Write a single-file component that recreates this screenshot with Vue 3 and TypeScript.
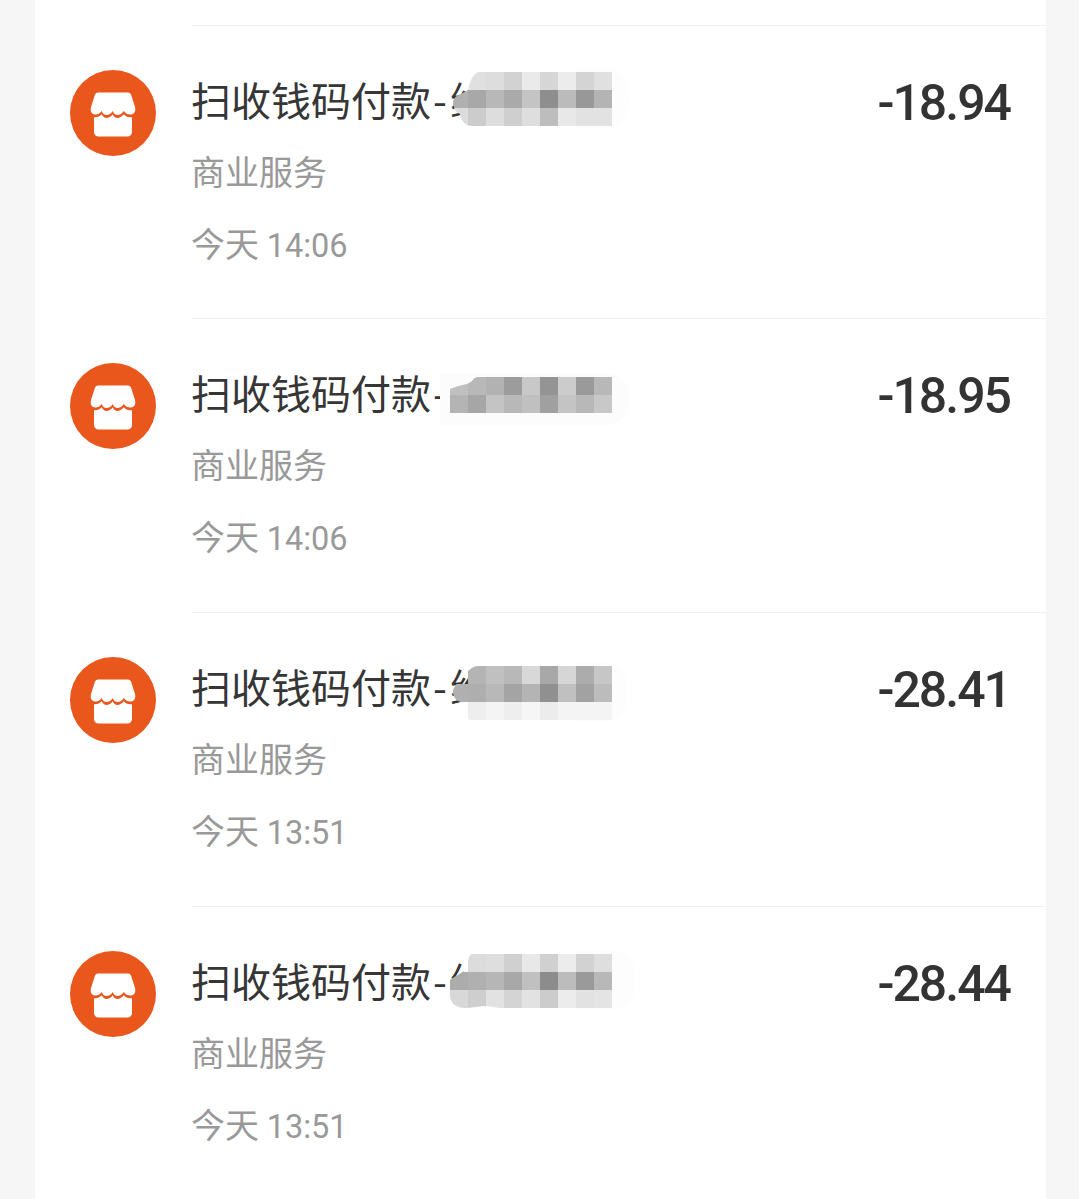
<script setup lang="ts">
interface Tx {
  amount: string
  date: string
  clock: string
  top: number
  clip: string
  cells: string[][]
}
const tx: Tx[] = [
  {
    amount: '-18.94', date: '今天', clock: '14:06', top: 47, clip: 'm1',
    cells: [
      ['', 'e0e0e0', 'dddddd', 'd2d2d2', 'eaeaea', 'd6d6d6', 'ececec', 'd4d4d4', 'e0e0e0'],
      ['b0b0b0', 'a8a8a8', 'b8b8b8', 'aaaaaa', 'c4c4c4', '8e8e8e', 'bbbbbb', '989898', 'b4b4b4'],
      ['dcdcdc', 'cccccc', 'dddddd', 'cfcfcf', 'dedede', 'bdbdbd', 'e8e8e8', 'e2e2e2', 'e2e2e2'],
    ],
  },
  {
    amount: '-18.95', date: '今天', clock: '14:06', top: 59, clip: 'm2',
    cells: [
      ['c0c0c0', 'b8b8b8', 'b2b2b2', '9c9c9c', 'c8c8c8', '949494', 'cccccc', '9a9a9a', 'b8b8b8'],
      ['b4b4b4', 'a6a6a6', 'c4c4c4', 'b8b8b8', 'c0c0c0', 'a0a0a0', 'c4c4c4', 'b8b8b8', 'c8c8c8'],
    ],
  },
  {
    amount: '-28.41', date: '今天', clock: '13:51', top: 54, clip: 'm3',
    cells: [
      ['', 'b4b4b4', 'c0c0c0', 'b8b8b8', 'd8d8d8', 'a8a8a8', 'd6d6d6', 'acacac', 'c6c6c6'],
      ['b0b0b0', 'aeaeae', 'b8b8b8', 'a4a4a4', 'b4b4b4', '909090', 'c0c0c0', 'a2a2a2', 'bcbcbc'],
      ['', 'eeeeee', 'f4f4f4', 'eeeeee', 'f6f6f6', 'ececec', 'f4f4f4', 'f4f4f4', 'f4f4f4'],
    ],
  },
  {
    amount: '-28.44', date: '今天', clock: '13:51', top: 48, clip: 'm4',
    cells: [
      ['', 'dcdcdc', 'dedede', 'd0d0d0', 'e8e8e8', 'd0d0d0', 'ececec', 'd2d2d2', 'dedede'],
      ['acacac', 'b0b0b0', 'b6b6b6', 'a8a8a8', 'c0c0c0', '8c8c8c', 'bcbcbc', '9a9a9a', 'b8b8b8'],
      ['d8d8d8', 'cecece', 'e2e2e2', 'd4d4d4', 'e2e2e2', 'cccccc', 'ececec', 'e2e2e2', 'e4e4e4'],
    ],
  },
]
</script>

<template>
  <main class="page">
    <section class="card">
      <article v-for="t in tx" :key="t.amount" class="row">
        <svg class="icon" viewBox="0 0 86 86" aria-hidden="true">
          <circle cx="43" cy="43" r="43" fill="#e9571d" />
          <path
            fill="#fff"
            d="M28 22.500H58a3.200 3.200 0 0 1 3 2L65 37C66 41 64.500 44.300 61 44.500C58 44.700 55.500 43.500 53.800 41C51.500 44 49.500 45 47.500 45C45.500 45 43.500 43.800 42.800 41C40.800 44 38.500 45 36.500 45C34.500 45 33 44 31.800 41C29.800 43.700 27.500 44.700 25 44.500C21.500 44.300 20 41 21 37L25 24.500a3.200 3.200 0 0 1 3-2Z"
          />
          <path
            fill="#fff"
            d="M24 47.200C27 47.500 29.500 46.800 31.800 44.300C33 47 34.500 48 36.500 48C38.500 48 41 47 42.800 44.300C43.500 47 45.500 48 47.500 48C49.500 48 51.500 47 53.800 44.300C55.500 46.800 58.500 47.700 62 47.200V62a4.500 4.500 0 0 1-4.500 4.500H28.500a4.500 4.500 0 0 1-4.500-4.500Z"
          />
        </svg>
        <div class="body">
          <div class="main">
            <div class="title">扫收钱码付款<span class="dash">-</span>维</div>
            <div class="sub">商业服务</div>
            <div class="time">{{ t.date }} <span class="clock">{{ t.clock }}</span></div>
          </div>
          <div class="amount">{{ t.amount }}</div>
        </div>
        <div class="smudge" :class="t.clip + 's'" :style="{ top: t.top - 4 + 'px' }"></div>
        <div class="mosaic" :class="t.clip" :style="{ top: t.top + 'px' }">
          <div v-for="(line, i) in t.cells" :key="i" class="mrow">
            <span
              v-for="(c, j) in line"
              :key="j"
              class="cell"
              :style="{ background: c ? '#' + c : 'transparent' }"
            ></span>
          </div>
        </div>
      </article>
    </section>
  </main>
</template>

<style scoped>
.page {
  width: 1079px;
  height: 1199px;
  overflow: hidden;
  background: #f6f6f6;
  box-sizing: border-box;
  padding: 0 33px 0 35px;
}
.card {
  background: #fff;
  height: 100%;
  padding-top: 25px;
  box-sizing: border-box;
}
.row {
  position: relative;
  display: flex;
  height: 294px;
  box-sizing: border-box;
  padding-left: 35px;
  gap: 36px;
}
.row:first-child {
  height: 293px;
}
.icon {
  width: 86px;
  height: 86px;
  margin-top: 45px;
  flex: none;
}
.body {
  flex: 1;
  display: flex;
  justify-content: space-between;
  border-top: 1.5px solid #f0f0f0;
  padding-right: 36px;
}
.main {
  font-family: "Noto Sans CJK SC", "Noto Sans", sans-serif;
  padding-top: 43px;
  margin-left: -1px;
}
.title {
  font-size: 40px;
  line-height: 60px;
  color: #363636;
  white-space: nowrap;
}
.dash {
  margin: 0 3px 0 2px;
}
.sub,
.time {
  font-size: 34px;
  line-height: 50px;
  color: #999;
  white-space: nowrap;
}
.sub {
  margin-top: 17px;
}
.time {
  margin-top: 22px;
}
.clock {
  font-family: Roboto, sans-serif;
  font-size: 32.5px;
}
.amount {
  font-family: Roboto, "Noto Sans", sans-serif;
  font-size: 50px;
  font-weight: 500;
  letter-spacing: -2px;
  line-height: 60px;
  margin-top: 47px;
  color: #333;
}
.mosaic {
  position: absolute;
  left: 415px;
  width: 162px;
}
.mrow {
  display: flex;
  height: 18px;
}
.cell {
  width: 18px;
  height: 18px;
  flex: none;
}
.m1 {
  clip-path: path("M30 0H162V54H22C14 54 10 46 10 42C5 40 3 34 3 30C3 24 12 22 18 18C20 8 24 0 30 0Z");
}
.m2 {
  clip-path: path("M28 0H162V36H0V12C8 8 18 8 22 4C24 1 26 0 28 0Z");
}
.m3 {
  clip-path: path("M28 0H162V54H22C14 54 12 42 12 36C6 36 3 30 3 26C3 20 8 18 12 10C18 6 22 0 28 0Z");
}
.m4 {
  clip-path: path("M22 0H162V54H50C30 50 26 54 14 54C8 54 0 50 0 42V26C4 22 14 20 18 10C18 4 20 0 22 0Z");
}
.smudge {
  position: absolute;
  left: 540px;
  width: 54px;
  height: 60px;
  background: #fdfdfd;
  border-radius: 0 24px 24px 0;
}
.m2s {
  left: 405px;
  width: 190px;
  height: 52px;
  top: 62px;
  background: #fcfcfc;
}
.m3s {
  width: 52px;
}
.m4s {
  width: 60px;
}
</style>

<style>
html,
body {
  margin: 0;
  background: #f6f6f6;
}
</style>
